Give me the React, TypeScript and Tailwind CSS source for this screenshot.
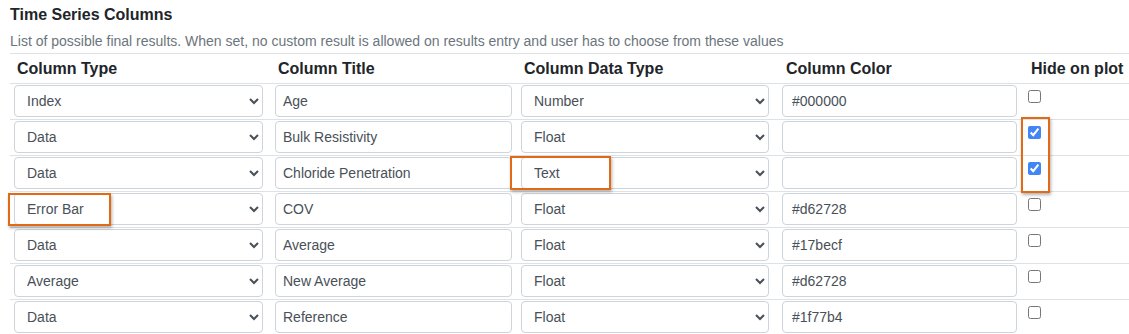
import React from "react";

type Row = {
  type: string;
  title: string;
  dataType: string;
  color: string;
  hide: boolean;
};

const rows: Row[] = [
  { type: "Index", title: "Age", dataType: "Number", color: "#000000", hide: false },
  { type: "Data", title: "Bulk Resistivity", dataType: "Float", color: "", hide: true },
  { type: "Data", title: "Chloride Penetration", dataType: "Text", color: "", hide: true },
  { type: "Error Bar", title: "COV", dataType: "Float", color: "#d62728", hide: false },
  { type: "Data", title: "Average", dataType: "Float", color: "#17becf", hide: false },
  { type: "Average", title: "New Average", dataType: "Float", color: "#d62728", hide: false },
  { type: "Data", title: "Reference", dataType: "Float", color: "#1f77b4", hide: false },
];

const typeOptions = ["Index", "Data", "Error Bar", "Average"];
const dataTypeOptions = ["Number", "Float", "Text"];

const gridCols = "grid grid-cols-[261px_246px_261px_244px_1fr]";

function Select({ value, options, width }: { value: string; options: string[]; width: string }) {
  return (
    <select
      defaultValue={value}
      className={`${width} h-[32px] pl-[8px] pr-[2px] text-[14px] text-[#495057] bg-white border border-[#ced4da] rounded-[4px]`}
    >
      {options.map((o) => (
        <option key={o}>{o}</option>
      ))}
    </select>
  );
}

export default function App() {
  return (
    <div className="relative w-[1129px] h-[334px] overflow-hidden bg-white pl-[10px] pt-[5px] font-['Liberation_Sans',Arial,sans-serif] text-[#212529]">
      <h3 className="text-[16px] leading-[20px] font-bold">Time Series Columns</h3>
      <p className="mt-[6px] text-[14px] leading-[20px] text-[#6c757d]">
        List of possible final results. When set, no custom result is allowed on results entry and user has to choose from these values
      </p>

      <div className="mt-[2px] border-t border-[#dee2e6]">
        {/* header */}
        <div className={`${gridCols} h-[30px] items-center border-b border-[#dee2e6] text-[16px] font-bold`}>
          <div className="pl-[7px] pt-[1px]">Column Type</div>
          <div className="pl-[7px] pt-[1px]">Column Title</div>
          <div className="pl-[7px] pt-[1px]">Column Data Type</div>
          <div className="pl-[8px] pt-[1px]">Column Color</div>
          <div className="pl-[9px] pt-[1px]">Hide on plot</div>
        </div>

        {rows.map((r, i) => (
          <div key={i} className={`${gridCols} pt-[1px] pb-[2px] border-b border-[#dee2e6]`}>
            <div className="pl-[4px]">
              <Select value={r.type} options={typeOptions} width="w-[249px]" />
            </div>
            <div className="pl-[4px]">
              <input
                defaultValue={r.title}
                className="w-[237px] h-[32px] pl-[7px] text-[14px] text-[#495057] bg-white border border-[#ced4da] rounded-[4px] outline-none"
              />
            </div>
            <div className="pl-[4px]">
              <Select value={r.dataType} options={dataTypeOptions} width="w-[248px]" />
            </div>
            <div className="pl-[4px]">
              <input
                defaultValue={r.color}
                className="w-[235px] h-[32px] pl-[9px] text-[14px] text-[#495057] bg-white border border-[#ced4da] rounded-[4px] outline-none"
              />
            </div>
            <div className="pl-[6px] pt-[5px]">
              <input type="checkbox" defaultChecked={r.hide} className="block w-[13px] h-[13px] accent-[#4285f4]" />
            </div>
          </div>
        ))}
      </div>

      {/* annotation highlights */}
      <div className="absolute left-[8px] top-[193px] w-[103px] h-[33px] border-2 border-[#e26a16] shadow-[1px_2px_3px_rgba(0,0,0,0.3)] pointer-events-none" />
      <div className="absolute left-[510px] top-[156px] w-[101px] h-[34px] border-2 border-[#e26a16] shadow-[1px_2px_3px_rgba(0,0,0,0.3)] pointer-events-none" />
      <div className="absolute left-[1021px] top-[117px] w-[29px] h-[76px] border-2 border-[#e26a16] shadow-[1px_2px_3px_rgba(0,0,0,0.3)] pointer-events-none" />
    </div>
  );
}
